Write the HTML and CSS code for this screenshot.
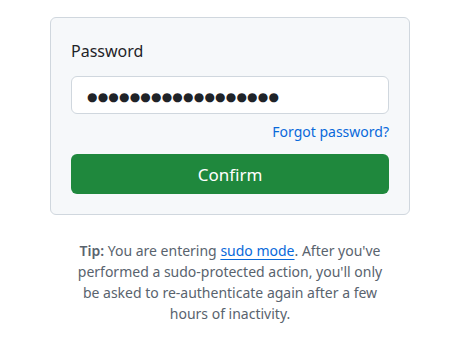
FILE: index.html
```html
<!DOCTYPE html>
<html>
<head>
<meta charset="utf-8">
<link rel="stylesheet" href="styles.css">
</head>
<body>
<main class="page">
  <form class="card">
    <label class="label" for="pw">Password</label>
    <div class="input" id="pw"><span class="dots">●●●●●●●●●●●●●●●●●●</span></div>
    <div class="forgot-row"><a class="link" href="#">Forgot password?</a></div>
    <button class="btn" type="button">Confirm</button>
  </form>
  <p class="tip"><strong>Tip:</strong> You are entering <a class="sudo" href="#">sudo mode</a>. After you've performed a sudo-protected action, you'll only be asked to re-authenticate again after a few hours of inactivity.</p>
</main>
</body>
</html>
```

FILE: styles.css
```css
* { box-sizing: border-box; }
html, body { margin: 0; padding: 0; background: #ffffff; }
body { font-family: "Noto Sans", "Open Sans", sans-serif; color: #1f2328; }
.page { width: 360px; margin: 17px 0 0 50px; }
.card {
  background: #f6f8fa;
  border: 1px solid #d0d7de;
  border-radius: 6px;
  padding: 20px;
  display: flex;
  flex-direction: column;
}
.label { font-size: 16px; line-height: 24px; margin-top: 1px; }
.input {
  margin-top: 13px;
  height: 38px;
  background: #ffffff;
  border: 1px solid #d0d7de;
  border-radius: 6px;
  padding: 0 15px;
  display: flex;
  align-items: center;
}
.dots { font-family: "DejaVu Sans", sans-serif; font-size: 12px; letter-spacing: 0.2px; color: #1f2328; padding-top: 4px; }
.forgot-row { display: flex; justify-content: flex-end; margin-top: 8px; }
.link { color: #0969da; text-decoration: none; font-size: 14px; line-height: 20px; }
.btn {
  margin-top: 12px;
  height: 40px;
  border: none;
  border-radius: 6px;
  background: #1f883d;
  color: #ffffff;
  font-family: inherit;
  font-size: 17px;
}
.tip {
  margin: 25px 20px 0;
  text-align: center;
  font-size: 14px;
  line-height: 21px;
  color: #59636e;
}
.tip strong { font-weight: 600; }
.sudo { color: #0969da; text-decoration: underline; text-underline-offset: 3px; }
```
